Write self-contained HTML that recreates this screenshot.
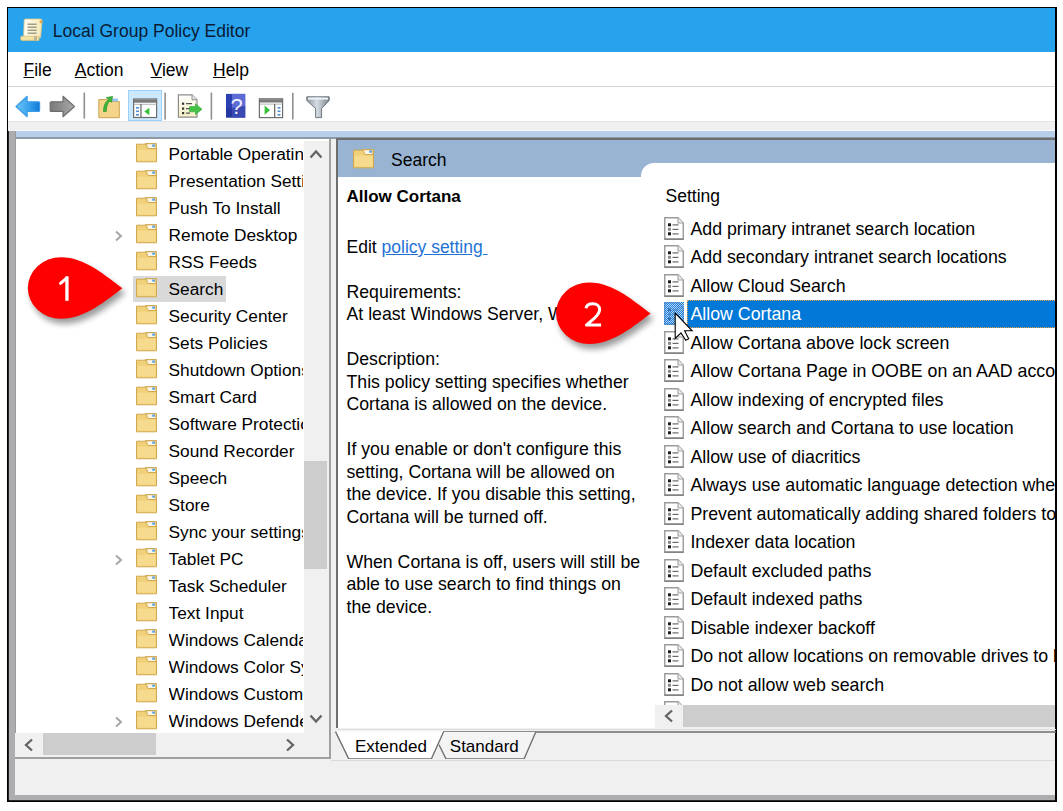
<!DOCTYPE html><html><head><meta charset="utf-8"><style>
*{margin:0;padding:0;box-sizing:border-box}
html,body{width:1063px;height:811px;overflow:hidden;background:#fff;font-family:"Liberation Sans",sans-serif;}
.a{position:absolute}
.t{position:absolute;font-size:17.5px;line-height:20px;white-space:nowrap;color:#000}
.fd{position:absolute}
.dc{position:absolute}
</style></head><body>
<div class="a" style="left:7px;top:7px;width:1050px;height:795px;background:#000"></div>
<div class="a" style="left:8px;top:8px;width:1px;height:792px;background:#222"></div>
<div class="a" style="left:9px;top:8px;width:1046px;height:792px;background:#adadb0"></div>
<div class="a" style="left:9px;top:800px;width:1046px;height:1px;background:#2a2a2a"></div>
<div class="a" style="left:8px;top:8px;width:1047px;height:44.6px;background:#27a3ee"></div>
<svg class="a" style="left:19px;top:18px" width="26" height="24" viewBox="0 0 26 24"><defs><linearGradient id="sc" x1="0" y1="0" x2="1" y2="0"><stop offset="0" stop-color="#fffef6"/><stop offset="1" stop-color="#f4e8b4"/></linearGradient></defs><path d="M5.2 2.2 Q5.6 1 7 1 H21.5 Q23.2 1 23 2.8 L21.6 19.5 H4.6 Z" fill="url(#sc)" stroke="#e0c888" stroke-width="0.8"/><circle cx="22" cy="3.8" r="1.5" fill="#e6a33e"/><path d="M8.6 6.2H17.6M8.6 9.2H17.6M8.6 12.2H17.6M8.6 15.2H17.6" stroke="#a29c88" stroke-width="1.6"/><path d="M2.8 18.2 H20 V22.4 H2.8 Q1.6 22.4 1.6 20.3 Q1.6 18.2 2.8 18.2Z" fill="#f2e4a8" stroke="#e0c070" stroke-width="0.8"/><rect x="15" y="18.4" width="3" height="3.8" fill="#9a9a90" opacity="0.6"/></svg>
<div class="t" style="left:52.8px;top:21.34px;font-size:17.5px;color:#0a1a33">Local Group Policy Editor</div>
<div class="a" style="left:8px;top:52px;width:1047px;height:70px;background:#fff"></div>
<div class="t" style="left:23.5px;top:59.64px;"><u>F</u>ile</div>
<div class="t" style="left:74.8px;top:59.64px;"><u>A</u>ction</div>
<div class="t" style="left:150.6px;top:59.64px;"><u>V</u>iew</div>
<div class="t" style="left:213px;top:59.64px;"><u>H</u>elp</div>
<div class="a" style="left:8px;top:86px;width:1047px;height:1px;background:#d5d5d5"></div>
<div class="a" style="left:8px;top:121px;width:1047px;height:1px;background:#e3e3e3"></div>
<div class="a" style="left:8px;top:122px;width:1047px;height:9px;background:#f0f0f0"></div>
<div class="a" style="left:15px;top:130px;width:1040px;height:1px;background:#f8fbff"></div>
<div class="a" style="left:15px;top:131px;width:1040px;height:6px;background:#b7cfe9"></div>
<div class="a" style="left:15px;top:137px;width:1040px;height:2px;background:#8e99a6"></div>
<div class="a" style="left:127.5px;top:89.5px;width:34px;height:31px;background:#cce8ff;border:1px solid #99d1ff"></div>
<svg class="a" style="left:0;top:0" width="340" height="125" viewBox="0 0 340 125">
<defs>
<linearGradient id="gb" x1="0" y1="0" x2="1" y2="0"><stop offset="0" stop-color="#6cc4f4"/><stop offset="0.5" stop-color="#3ea6ee"/><stop offset="1" stop-color="#0f78d6"/></linearGradient>
<linearGradient id="gg" x1="0" y1="0" x2="1" y2="0"><stop offset="0" stop-color="#7a7a7a"/><stop offset="1" stop-color="#a8a8a8"/></linearGradient>
<linearGradient id="gf" x1="0" y1="0" x2="1" y2="0"><stop offset="0" stop-color="#8c949c"/><stop offset="0.45" stop-color="#d6dde4"/><stop offset="1" stop-color="#7a828a"/></linearGradient>
<linearGradient id="gd" x1="0" y1="0" x2="0" y2="1"><stop offset="0" stop-color="#ffffff"/><stop offset="1" stop-color="#f6efc4"/></linearGradient>
</defs>
<path d="M16,106.5 L27.1,96.3 V101.8 H38.6 Q39.6,101.8 39.6,102.8 V110.4 Q39.6,111.4 38.6,111.4 H27.1 V116.7 Z" fill="url(#gb)" stroke="#3c9be6" stroke-width="1.2" stroke-linejoin="round"/>
<path d="M74.5,106.5 L63,96.3 V101.8 H51.2 Q50.2,101.8 50.2,102.8 V110.4 Q50.2,111.4 51.2,111.4 H63 V116.7 Z" fill="url(#gg)" stroke="#6e6e6e" stroke-width="1.2" stroke-linejoin="round"/>
<rect x="83.5" y="92.5" width="1.6" height="26" fill="#8f8f8f"/>
<rect x="164.3" y="92.6" width="1.6" height="27" fill="#8f8f8f"/>
<rect x="210.6" y="92.6" width="1.6" height="27" fill="#8f8f8f"/>
<rect x="292" y="92.8" width="1.6" height="26.6" fill="#8f8f8f"/>
<path d="M98.8,99.5 H107 L108.5,101.5 H119.3 V117.7 H98.8 Z" fill="#f4d488" stroke="#c9a453" stroke-width="1"/>
<rect x="111" y="98.5" width="7" height="3" fill="#9cc6ea"/>
<path d="M103.5,111.5 C103.5,106 105,102 108.5,99.8 L106.2,97.6 L112.6,96.4 L111.4,102.2 L109.8,101 C107.5,103 106.5,107 106.3,111.5 Z" fill="#3fb33a" stroke="#2f9a2c" stroke-width="0.7"/>
<rect x="133.6" y="99" width="23" height="18.5" fill="#fff" stroke="#6d6d6d" stroke-width="1.2"/>
<rect x="134" y="99.5" width="22.5" height="3.2" fill="#7a7a7a"/>
<rect x="134" y="103.8" width="22.5" height="1" fill="#b5b5b5"/>
<rect x="140.3" y="104" width="1.3" height="13.5" fill="#6d6d6d"/>
<rect x="136" y="107" width="3" height="1.6" fill="#4f8fd0"/><rect x="136" y="110.5" width="3" height="1.6" fill="#4f8fd0"/><rect x="136" y="114" width="3" height="1.6" fill="#4f8fd0"/>
<path d="M149.3,107.8 L144.3,111.6 L149.3,115.3 Z" fill="#36c036"/>
<path d="M178.4,94.8 H192 L197,99.8 V117.2 H178.4 Z" fill="url(#gd)" stroke="#8c8c8c" stroke-width="1.2"/>
<path d="M192,94.8 V99.8 H197" fill="#e6e6e6" stroke="#8c8c8c" stroke-width="1"/>
<rect x="182" y="102.6" width="2.2" height="2.2" fill="#333"/><rect x="182" y="107.5" width="2.2" height="2.2" fill="#333"/><rect x="182" y="112" width="2.2" height="2.2" fill="#333"/>
<path d="M186,103.7 H192 M186,108.6 H190 M186,113.1 H190" stroke="#555" stroke-width="1.2"/>
<path d="M189.6,106.6 H195.5 V103.7 L202,109.2 L195.5,114.6 V111.8 H189.6 Z" fill="#45c245" stroke="#2fa22f" stroke-width="0.6"/>
<rect x="226" y="93.9" width="19.2" height="23.7" fill="#2a3fb0"/>
<path d="M232,93.9 H245.2 V117.6 H232 Z" fill="#5d6bd4"/>
<path d="M226,109 L245.2,106 V117.6 H226Z" fill="#23349a" opacity="0.6"/>
<text x="236.6" y="113.8" style="font-family:'Liberation Sans'" font-size="22" fill="#eef0ff" text-anchor="middle">?</text>
<rect x="259.4" y="98.8" width="23.2" height="18.8" fill="#fff" stroke="#6d6d6d" stroke-width="1.2"/>
<rect x="259.8" y="99.3" width="22.6" height="3.2" fill="#7a7a7a"/>
<rect x="259.8" y="103.6" width="22.6" height="1" fill="#b5b5b5"/>
<rect x="274" y="104" width="1.3" height="13.5" fill="#6d6d6d"/>
<rect x="277.5" y="107" width="3" height="1.6" fill="#4f8fd0"/><rect x="277.5" y="110.5" width="3" height="1.6" fill="#4f8fd0"/><rect x="277.5" y="114" width="3" height="1.6" fill="#4f8fd0"/>
<path d="M264.6,105.5 L270,110.2 L264.6,114.8 Z" fill="#36c036"/>
<path d="M306.8,96.8 H329.2 V100.6 L321.6,108.5 V117.6 H315.6 V108.5 L306.8,100.6 Z" fill="url(#gf)" stroke="#6f7780" stroke-width="1" stroke-linejoin="round"/>
<rect x="308" y="97.6" width="20" height="2" fill="#eef2f6"/>
</svg>
<div class="a" style="left:15px;top:139px;width:316px;height:620px;background:#a0a0a0"></div>
<div class="a" style="left:15px;top:139px;width:314px;height:618px;background:#fff;overflow:hidden" id="lp">
<div class="a" style="left:121px;top:4.30px"><svg class="fd" width="22" height="20" viewBox="0 0 22 20"><path d="M9.5 0.5H20.5V8H9.5Z" fill="#e6c46e" stroke="#d0aa55"/><rect x="11.2" y="1.3" width="8" height="3.8" fill="#f8f6ec"/><rect x="16.2" y="1.5" width="2.8" height="2.2" fill="#5b9fe0"/><path d="M0.5 1.2H9Q10.2 1.2 10.7 2.6L11.4 4.6Q11.8 5.5 12.8 5.5H20.5V18.8H0.5Z" fill="#f1d07a" stroke="#d0a84e"/><path d="M1.5 6.8H19.5V17.6H1.5Z" fill="#f6da8e"/></svg></div>
<div class="t" style="left:153.6px;top:4.69px;font-size:17.3px;width:134px;overflow:hidden">Portable Operating System</div>
<div class="a" style="left:121px;top:31.30px"><svg class="fd" width="22" height="20" viewBox="0 0 22 20"><path d="M9.5 0.5H20.5V8H9.5Z" fill="#e6c46e" stroke="#d0aa55"/><rect x="11.2" y="1.3" width="8" height="3.8" fill="#f8f6ec"/><rect x="16.2" y="1.5" width="2.8" height="2.2" fill="#5b9fe0"/><path d="M0.5 1.2H9Q10.2 1.2 10.7 2.6L11.4 4.6Q11.8 5.5 12.8 5.5H20.5V18.8H0.5Z" fill="#f1d07a" stroke="#d0a84e"/><path d="M1.5 6.8H19.5V17.6H1.5Z" fill="#f6da8e"/></svg></div>
<div class="t" style="left:153.6px;top:31.69px;font-size:17.3px;width:134px;overflow:hidden">Presentation Settings</div>
<div class="a" style="left:121px;top:58.30px"><svg class="fd" width="22" height="20" viewBox="0 0 22 20"><path d="M9.5 0.5H20.5V8H9.5Z" fill="#e6c46e" stroke="#d0aa55"/><rect x="11.2" y="1.3" width="8" height="3.8" fill="#f8f6ec"/><rect x="16.2" y="1.5" width="2.8" height="2.2" fill="#5b9fe0"/><path d="M0.5 1.2H9Q10.2 1.2 10.7 2.6L11.4 4.6Q11.8 5.5 12.8 5.5H20.5V18.8H0.5Z" fill="#f1d07a" stroke="#d0a84e"/><path d="M1.5 6.8H19.5V17.6H1.5Z" fill="#f6da8e"/></svg></div>
<div class="t" style="left:153.6px;top:58.69px;font-size:17.3px;width:134px;overflow:hidden">Push To Install</div>
<div class="a" style="left:121px;top:85.30px"><svg class="fd" width="22" height="20" viewBox="0 0 22 20"><path d="M9.5 0.5H20.5V8H9.5Z" fill="#e6c46e" stroke="#d0aa55"/><rect x="11.2" y="1.3" width="8" height="3.8" fill="#f8f6ec"/><rect x="16.2" y="1.5" width="2.8" height="2.2" fill="#5b9fe0"/><path d="M0.5 1.2H9Q10.2 1.2 10.7 2.6L11.4 4.6Q11.8 5.5 12.8 5.5H20.5V18.8H0.5Z" fill="#f1d07a" stroke="#d0a84e"/><path d="M1.5 6.8H19.5V17.6H1.5Z" fill="#f6da8e"/></svg></div>
<div class="t" style="left:153.6px;top:85.69px;font-size:17.3px;width:134px;overflow:hidden">Remote Desktop</div>
<svg class="a" style="left:98px;top:90px" width="12" height="14" viewBox="0 0 12 14"><path d="M3 2.5 L8 7 L3 11.5" fill="none" stroke="#a6a6a6" stroke-width="2"/></svg>
<div class="a" style="left:121px;top:112.30px"><svg class="fd" width="22" height="20" viewBox="0 0 22 20"><path d="M9.5 0.5H20.5V8H9.5Z" fill="#e6c46e" stroke="#d0aa55"/><rect x="11.2" y="1.3" width="8" height="3.8" fill="#f8f6ec"/><rect x="16.2" y="1.5" width="2.8" height="2.2" fill="#5b9fe0"/><path d="M0.5 1.2H9Q10.2 1.2 10.7 2.6L11.4 4.6Q11.8 5.5 12.8 5.5H20.5V18.8H0.5Z" fill="#f1d07a" stroke="#d0a84e"/><path d="M1.5 6.8H19.5V17.6H1.5Z" fill="#f6da8e"/></svg></div>
<div class="t" style="left:153.6px;top:112.69px;font-size:17.3px;width:134px;overflow:hidden">RSS Feeds</div>
<div class="a" style="left:118px;top:137px;width:93px;height:26px;background:#d9d9d9"></div>
<div class="a" style="left:121px;top:139.30px"><svg class="fd" width="22" height="20" viewBox="0 0 22 20"><path d="M9.5 0.5H20.5V8H9.5Z" fill="#e6c46e" stroke="#d0aa55"/><rect x="11.2" y="1.3" width="8" height="3.8" fill="#f8f6ec"/><rect x="16.2" y="1.5" width="2.8" height="2.2" fill="#5b9fe0"/><path d="M0.5 1.2H9Q10.2 1.2 10.7 2.6L11.4 4.6Q11.8 5.5 12.8 5.5H20.5V18.8H0.5Z" fill="#f1d07a" stroke="#d0a84e"/><path d="M1.5 6.8H19.5V17.6H1.5Z" fill="#f6da8e"/></svg></div>
<div class="t" style="left:153.6px;top:139.69px;font-size:17.3px;width:134px;overflow:hidden">Search</div>
<div class="a" style="left:121px;top:166.30px"><svg class="fd" width="22" height="20" viewBox="0 0 22 20"><path d="M9.5 0.5H20.5V8H9.5Z" fill="#e6c46e" stroke="#d0aa55"/><rect x="11.2" y="1.3" width="8" height="3.8" fill="#f8f6ec"/><rect x="16.2" y="1.5" width="2.8" height="2.2" fill="#5b9fe0"/><path d="M0.5 1.2H9Q10.2 1.2 10.7 2.6L11.4 4.6Q11.8 5.5 12.8 5.5H20.5V18.8H0.5Z" fill="#f1d07a" stroke="#d0a84e"/><path d="M1.5 6.8H19.5V17.6H1.5Z" fill="#f6da8e"/></svg></div>
<div class="t" style="left:153.6px;top:166.69px;font-size:17.3px;width:134px;overflow:hidden">Security Center</div>
<div class="a" style="left:121px;top:193.30px"><svg class="fd" width="22" height="20" viewBox="0 0 22 20"><path d="M9.5 0.5H20.5V8H9.5Z" fill="#e6c46e" stroke="#d0aa55"/><rect x="11.2" y="1.3" width="8" height="3.8" fill="#f8f6ec"/><rect x="16.2" y="1.5" width="2.8" height="2.2" fill="#5b9fe0"/><path d="M0.5 1.2H9Q10.2 1.2 10.7 2.6L11.4 4.6Q11.8 5.5 12.8 5.5H20.5V18.8H0.5Z" fill="#f1d07a" stroke="#d0a84e"/><path d="M1.5 6.8H19.5V17.6H1.5Z" fill="#f6da8e"/></svg></div>
<div class="t" style="left:153.6px;top:193.69px;font-size:17.3px;width:134px;overflow:hidden">Sets Policies</div>
<div class="a" style="left:121px;top:220.30px"><svg class="fd" width="22" height="20" viewBox="0 0 22 20"><path d="M9.5 0.5H20.5V8H9.5Z" fill="#e6c46e" stroke="#d0aa55"/><rect x="11.2" y="1.3" width="8" height="3.8" fill="#f8f6ec"/><rect x="16.2" y="1.5" width="2.8" height="2.2" fill="#5b9fe0"/><path d="M0.5 1.2H9Q10.2 1.2 10.7 2.6L11.4 4.6Q11.8 5.5 12.8 5.5H20.5V18.8H0.5Z" fill="#f1d07a" stroke="#d0a84e"/><path d="M1.5 6.8H19.5V17.6H1.5Z" fill="#f6da8e"/></svg></div>
<div class="t" style="left:153.6px;top:220.69px;font-size:17.3px;width:134px;overflow:hidden">Shutdown Options</div>
<div class="a" style="left:121px;top:247.30px"><svg class="fd" width="22" height="20" viewBox="0 0 22 20"><path d="M9.5 0.5H20.5V8H9.5Z" fill="#e6c46e" stroke="#d0aa55"/><rect x="11.2" y="1.3" width="8" height="3.8" fill="#f8f6ec"/><rect x="16.2" y="1.5" width="2.8" height="2.2" fill="#5b9fe0"/><path d="M0.5 1.2H9Q10.2 1.2 10.7 2.6L11.4 4.6Q11.8 5.5 12.8 5.5H20.5V18.8H0.5Z" fill="#f1d07a" stroke="#d0a84e"/><path d="M1.5 6.8H19.5V17.6H1.5Z" fill="#f6da8e"/></svg></div>
<div class="t" style="left:153.6px;top:247.69px;font-size:17.3px;width:134px;overflow:hidden">Smart Card</div>
<div class="a" style="left:121px;top:274.30px"><svg class="fd" width="22" height="20" viewBox="0 0 22 20"><path d="M9.5 0.5H20.5V8H9.5Z" fill="#e6c46e" stroke="#d0aa55"/><rect x="11.2" y="1.3" width="8" height="3.8" fill="#f8f6ec"/><rect x="16.2" y="1.5" width="2.8" height="2.2" fill="#5b9fe0"/><path d="M0.5 1.2H9Q10.2 1.2 10.7 2.6L11.4 4.6Q11.8 5.5 12.8 5.5H20.5V18.8H0.5Z" fill="#f1d07a" stroke="#d0a84e"/><path d="M1.5 6.8H19.5V17.6H1.5Z" fill="#f6da8e"/></svg></div>
<div class="t" style="left:153.6px;top:274.69px;font-size:17.3px;width:134px;overflow:hidden">Software Protection Platform</div>
<div class="a" style="left:121px;top:301.30px"><svg class="fd" width="22" height="20" viewBox="0 0 22 20"><path d="M9.5 0.5H20.5V8H9.5Z" fill="#e6c46e" stroke="#d0aa55"/><rect x="11.2" y="1.3" width="8" height="3.8" fill="#f8f6ec"/><rect x="16.2" y="1.5" width="2.8" height="2.2" fill="#5b9fe0"/><path d="M0.5 1.2H9Q10.2 1.2 10.7 2.6L11.4 4.6Q11.8 5.5 12.8 5.5H20.5V18.8H0.5Z" fill="#f1d07a" stroke="#d0a84e"/><path d="M1.5 6.8H19.5V17.6H1.5Z" fill="#f6da8e"/></svg></div>
<div class="t" style="left:153.6px;top:301.69px;font-size:17.3px;width:134px;overflow:hidden">Sound Recorder</div>
<div class="a" style="left:121px;top:328.30px"><svg class="fd" width="22" height="20" viewBox="0 0 22 20"><path d="M9.5 0.5H20.5V8H9.5Z" fill="#e6c46e" stroke="#d0aa55"/><rect x="11.2" y="1.3" width="8" height="3.8" fill="#f8f6ec"/><rect x="16.2" y="1.5" width="2.8" height="2.2" fill="#5b9fe0"/><path d="M0.5 1.2H9Q10.2 1.2 10.7 2.6L11.4 4.6Q11.8 5.5 12.8 5.5H20.5V18.8H0.5Z" fill="#f1d07a" stroke="#d0a84e"/><path d="M1.5 6.8H19.5V17.6H1.5Z" fill="#f6da8e"/></svg></div>
<div class="t" style="left:153.6px;top:328.69px;font-size:17.3px;width:134px;overflow:hidden">Speech</div>
<div class="a" style="left:121px;top:355.30px"><svg class="fd" width="22" height="20" viewBox="0 0 22 20"><path d="M9.5 0.5H20.5V8H9.5Z" fill="#e6c46e" stroke="#d0aa55"/><rect x="11.2" y="1.3" width="8" height="3.8" fill="#f8f6ec"/><rect x="16.2" y="1.5" width="2.8" height="2.2" fill="#5b9fe0"/><path d="M0.5 1.2H9Q10.2 1.2 10.7 2.6L11.4 4.6Q11.8 5.5 12.8 5.5H20.5V18.8H0.5Z" fill="#f1d07a" stroke="#d0a84e"/><path d="M1.5 6.8H19.5V17.6H1.5Z" fill="#f6da8e"/></svg></div>
<div class="t" style="left:153.6px;top:355.69px;font-size:17.3px;width:134px;overflow:hidden">Store</div>
<div class="a" style="left:121px;top:382.30px"><svg class="fd" width="22" height="20" viewBox="0 0 22 20"><path d="M9.5 0.5H20.5V8H9.5Z" fill="#e6c46e" stroke="#d0aa55"/><rect x="11.2" y="1.3" width="8" height="3.8" fill="#f8f6ec"/><rect x="16.2" y="1.5" width="2.8" height="2.2" fill="#5b9fe0"/><path d="M0.5 1.2H9Q10.2 1.2 10.7 2.6L11.4 4.6Q11.8 5.5 12.8 5.5H20.5V18.8H0.5Z" fill="#f1d07a" stroke="#d0a84e"/><path d="M1.5 6.8H19.5V17.6H1.5Z" fill="#f6da8e"/></svg></div>
<div class="t" style="left:153.6px;top:382.69px;font-size:17.3px;width:134px;overflow:hidden">Sync your settings</div>
<div class="a" style="left:121px;top:409.30px"><svg class="fd" width="22" height="20" viewBox="0 0 22 20"><path d="M9.5 0.5H20.5V8H9.5Z" fill="#e6c46e" stroke="#d0aa55"/><rect x="11.2" y="1.3" width="8" height="3.8" fill="#f8f6ec"/><rect x="16.2" y="1.5" width="2.8" height="2.2" fill="#5b9fe0"/><path d="M0.5 1.2H9Q10.2 1.2 10.7 2.6L11.4 4.6Q11.8 5.5 12.8 5.5H20.5V18.8H0.5Z" fill="#f1d07a" stroke="#d0a84e"/><path d="M1.5 6.8H19.5V17.6H1.5Z" fill="#f6da8e"/></svg></div>
<div class="t" style="left:153.6px;top:409.69px;font-size:17.3px;width:134px;overflow:hidden">Tablet PC</div>
<svg class="a" style="left:98px;top:414px" width="12" height="14" viewBox="0 0 12 14"><path d="M3 2.5 L8 7 L3 11.5" fill="none" stroke="#a6a6a6" stroke-width="2"/></svg>
<div class="a" style="left:121px;top:436.30px"><svg class="fd" width="22" height="20" viewBox="0 0 22 20"><path d="M9.5 0.5H20.5V8H9.5Z" fill="#e6c46e" stroke="#d0aa55"/><rect x="11.2" y="1.3" width="8" height="3.8" fill="#f8f6ec"/><rect x="16.2" y="1.5" width="2.8" height="2.2" fill="#5b9fe0"/><path d="M0.5 1.2H9Q10.2 1.2 10.7 2.6L11.4 4.6Q11.8 5.5 12.8 5.5H20.5V18.8H0.5Z" fill="#f1d07a" stroke="#d0a84e"/><path d="M1.5 6.8H19.5V17.6H1.5Z" fill="#f6da8e"/></svg></div>
<div class="t" style="left:153.6px;top:436.69px;font-size:17.3px;width:134px;overflow:hidden">Task Scheduler</div>
<div class="a" style="left:121px;top:463.30px"><svg class="fd" width="22" height="20" viewBox="0 0 22 20"><path d="M9.5 0.5H20.5V8H9.5Z" fill="#e6c46e" stroke="#d0aa55"/><rect x="11.2" y="1.3" width="8" height="3.8" fill="#f8f6ec"/><rect x="16.2" y="1.5" width="2.8" height="2.2" fill="#5b9fe0"/><path d="M0.5 1.2H9Q10.2 1.2 10.7 2.6L11.4 4.6Q11.8 5.5 12.8 5.5H20.5V18.8H0.5Z" fill="#f1d07a" stroke="#d0a84e"/><path d="M1.5 6.8H19.5V17.6H1.5Z" fill="#f6da8e"/></svg></div>
<div class="t" style="left:153.6px;top:463.69px;font-size:17.3px;width:134px;overflow:hidden">Text Input</div>
<div class="a" style="left:121px;top:490.30px"><svg class="fd" width="22" height="20" viewBox="0 0 22 20"><path d="M9.5 0.5H20.5V8H9.5Z" fill="#e6c46e" stroke="#d0aa55"/><rect x="11.2" y="1.3" width="8" height="3.8" fill="#f8f6ec"/><rect x="16.2" y="1.5" width="2.8" height="2.2" fill="#5b9fe0"/><path d="M0.5 1.2H9Q10.2 1.2 10.7 2.6L11.4 4.6Q11.8 5.5 12.8 5.5H20.5V18.8H0.5Z" fill="#f1d07a" stroke="#d0a84e"/><path d="M1.5 6.8H19.5V17.6H1.5Z" fill="#f6da8e"/></svg></div>
<div class="t" style="left:153.6px;top:490.69px;font-size:17.3px;width:134px;overflow:hidden">Windows Calendar</div>
<div class="a" style="left:121px;top:517.30px"><svg class="fd" width="22" height="20" viewBox="0 0 22 20"><path d="M9.5 0.5H20.5V8H9.5Z" fill="#e6c46e" stroke="#d0aa55"/><rect x="11.2" y="1.3" width="8" height="3.8" fill="#f8f6ec"/><rect x="16.2" y="1.5" width="2.8" height="2.2" fill="#5b9fe0"/><path d="M0.5 1.2H9Q10.2 1.2 10.7 2.6L11.4 4.6Q11.8 5.5 12.8 5.5H20.5V18.8H0.5Z" fill="#f1d07a" stroke="#d0a84e"/><path d="M1.5 6.8H19.5V17.6H1.5Z" fill="#f6da8e"/></svg></div>
<div class="t" style="left:153.6px;top:517.69px;font-size:17.3px;width:134px;overflow:hidden">Windows Color System</div>
<div class="a" style="left:121px;top:544.30px"><svg class="fd" width="22" height="20" viewBox="0 0 22 20"><path d="M9.5 0.5H20.5V8H9.5Z" fill="#e6c46e" stroke="#d0aa55"/><rect x="11.2" y="1.3" width="8" height="3.8" fill="#f8f6ec"/><rect x="16.2" y="1.5" width="2.8" height="2.2" fill="#5b9fe0"/><path d="M0.5 1.2H9Q10.2 1.2 10.7 2.6L11.4 4.6Q11.8 5.5 12.8 5.5H20.5V18.8H0.5Z" fill="#f1d07a" stroke="#d0a84e"/><path d="M1.5 6.8H19.5V17.6H1.5Z" fill="#f6da8e"/></svg></div>
<div class="t" style="left:153.6px;top:544.69px;font-size:17.3px;width:134px;overflow:hidden">Windows Customer Experience</div>
<div class="a" style="left:121px;top:571.30px"><svg class="fd" width="22" height="20" viewBox="0 0 22 20"><path d="M9.5 0.5H20.5V8H9.5Z" fill="#e6c46e" stroke="#d0aa55"/><rect x="11.2" y="1.3" width="8" height="3.8" fill="#f8f6ec"/><rect x="16.2" y="1.5" width="2.8" height="2.2" fill="#5b9fe0"/><path d="M0.5 1.2H9Q10.2 1.2 10.7 2.6L11.4 4.6Q11.8 5.5 12.8 5.5H20.5V18.8H0.5Z" fill="#f1d07a" stroke="#d0a84e"/><path d="M1.5 6.8H19.5V17.6H1.5Z" fill="#f6da8e"/></svg></div>
<div class="t" style="left:153.6px;top:571.69px;font-size:17.3px;width:134px;overflow:hidden">Windows Defender</div>
<svg class="a" style="left:98px;top:576px" width="12" height="14" viewBox="0 0 12 14"><path d="M3 2.5 L8 7 L3 11.5" fill="none" stroke="#a6a6a6" stroke-width="2"/></svg>
</div>
<div class="a" style="left:15px;top:131px;width:1px;height:663px;background:#9a9aa0"></div>
<div class="a" style="left:304px;top:141px;width:25px;height:592px;background:#f0f0f0"></div>
<div class="a" style="left:304px;top:461px;width:23px;height:108px;background:#cdcdcd"></div>
<svg class="a" style="left:307px;top:146px" width="18" height="16" viewBox="0 0 18 16"><path d="M3.5 11.5 L9 5.5 L14.5 11.5" fill="none" stroke="#646464" stroke-width="2.3"/></svg>
<svg class="a" style="left:307px;top:711px" width="18" height="16" viewBox="0 0 18 16"><path d="M3.5 4.5 L9 10.5 L14.5 4.5" fill="none" stroke="#646464" stroke-width="2.3"/></svg>
<div class="a" style="left:15px;top:733px;width:314px;height:24px;background:#f0f0f0"></div>
<div class="a" style="left:43px;top:733px;width:113px;height:22px;background:#cdcdcd"></div>
<svg class="a" style="left:21px;top:736px" width="16" height="18" viewBox="0 0 16 18"><path d="M11 3.5 L5 9 L11 14.5" fill="none" stroke="#646464" stroke-width="2.3"/></svg>
<svg class="a" style="left:282px;top:736px" width="16" height="18" viewBox="0 0 16 18"><path d="M5 3.5 L11 9 L5 14.5" fill="none" stroke="#646464" stroke-width="2.3"/></svg>
<div class="a" style="left:331px;top:139px;width:5px;height:620px;background:#f0f0f0"></div>
<div class="a" style="left:336px;top:138px;width:719px;height:591px;background:#6e6e6e"></div>
<div class="a" style="left:338px;top:140px;width:717px;height:589px;background:#fff"></div>
<div class="a" style="left:338px;top:140px;width:717px;height:37px;background:#98b4d2"></div>
<div class="a" style="left:641px;top:163px;width:414px;height:30px;background:#fff;border-top-left-radius:13px"></div>
<div class="a" style="left:353px;top:149px"><svg class="fd" width="22" height="20" viewBox="0 0 22 20"><path d="M9.5 0.5H20.5V8H9.5Z" fill="#e6c46e" stroke="#d0aa55"/><rect x="11.2" y="1.3" width="8" height="3.8" fill="#f8f6ec"/><rect x="16.2" y="1.5" width="2.8" height="2.2" fill="#5b9fe0"/><path d="M0.5 1.2H9Q10.2 1.2 10.7 2.6L11.4 4.6Q11.8 5.5 12.8 5.5H20.5V18.8H0.5Z" fill="#f1d07a" stroke="#d0a84e"/><path d="M1.5 6.8H19.5V17.6H1.5Z" fill="#f6da8e"/></svg></div>
<div class="t" style="left:391px;top:149.94px;">Search</div>
<div class="t" style="left:346.5px;top:187.44px;font-weight:bold;font-size:17px">Allow Cortana</div>
<div class="t" style="left:346.5px;top:236.94px;">Edit <span style="color:#1f72d6;text-decoration:underline">policy setting&nbsp;</span></div>
<div class="t" style="left:346.5px;top:281.54px;font-size:17.7px">Requirements:</div>
<div class="t" style="left:346.5px;top:304.14px;font-size:17.7px">At least Windows Server, Windows 10</div>
<div class="t" style="left:346.5px;top:349.04px;font-size:17.7px">Description:</div>
<div class="t" style="left:346.5px;top:371.54px;font-size:17.7px">This policy setting specifies whether</div>
<div class="t" style="left:346.5px;top:394.04px;font-size:17.7px">Cortana is allowed on the device.</div>
<div class="t" style="left:346.5px;top:439.04px;font-size:17.7px">If you enable or don't configure this</div>
<div class="t" style="left:346.5px;top:461.54px;font-size:17.7px">setting, Cortana will be allowed on</div>
<div class="t" style="left:346.5px;top:484.04px;font-size:17.7px">the device. If you disable this setting,</div>
<div class="t" style="left:346.5px;top:506.54px;font-size:17.7px">Cortana will be turned off.</div>
<div class="t" style="left:346.5px;top:551.54px;font-size:17.7px">When Cortana is off, users will still be</div>
<div class="t" style="left:346.5px;top:574.04px;font-size:17.7px">able to use search to find things on</div>
<div class="t" style="left:346.5px;top:596.54px;font-size:17.7px">the device.</div>
<div class="a" style="left:652px;top:177px;width:403px;height:552px;background:#fff;overflow:hidden" id="rp">
<div class="t" style="left:13.5px;top:8.74px;">Setting</div>
<div class="t" style="left:38.39999999999998px;top:41.84px;font-size:17.8px">Add primary intranet search location</div>
<div class="a" style="left:12px;top:39.80px"><svg class="dc" width="20" height="23" viewBox="0 0 20 23"><path d="M0.75 0.75H14L19.25 6V22.25H0.75Z" fill="#fff" stroke="#9a9a9a" stroke-width="1.4"/><path d="M14 0.75V6H19.25" fill="#ececec" stroke="#a0a0a0" stroke-width="1.1"/><path d="M0.75 22.1H19.25" stroke="#7a7a7a" stroke-width="1.3"/><rect x="4" y="6.3" width="3" height="3" fill="#1a1a1a"/><rect x="4" y="10.8" width="3" height="3" fill="#8a8a8a"/><rect x="4" y="15.3" width="3" height="3" fill="#1a1a1a"/><rect x="8.5" y="7.3" width="6" height="1.2" fill="#6a6a6a"/><rect x="8.5" y="11.8" width="6" height="1.2" fill="#6a6a6a"/><rect x="8.5" y="16.3" width="6" height="1.2" fill="#6a6a6a"/></svg></div>
<div class="t" style="left:38.39999999999998px;top:70.34px;font-size:17.8px">Add secondary intranet search locations</div>
<div class="a" style="left:12px;top:68.30px"><svg class="dc" width="20" height="23" viewBox="0 0 20 23"><path d="M0.75 0.75H14L19.25 6V22.25H0.75Z" fill="#fff" stroke="#9a9a9a" stroke-width="1.4"/><path d="M14 0.75V6H19.25" fill="#ececec" stroke="#a0a0a0" stroke-width="1.1"/><path d="M0.75 22.1H19.25" stroke="#7a7a7a" stroke-width="1.3"/><rect x="4" y="6.3" width="3" height="3" fill="#1a1a1a"/><rect x="4" y="10.8" width="3" height="3" fill="#8a8a8a"/><rect x="4" y="15.3" width="3" height="3" fill="#1a1a1a"/><rect x="8.5" y="7.3" width="6" height="1.2" fill="#6a6a6a"/><rect x="8.5" y="11.8" width="6" height="1.2" fill="#6a6a6a"/><rect x="8.5" y="16.3" width="6" height="1.2" fill="#6a6a6a"/></svg></div>
<div class="t" style="left:38.39999999999998px;top:98.84px;font-size:17.8px">Allow Cloud Search</div>
<div class="a" style="left:12px;top:96.80px"><svg class="dc" width="20" height="23" viewBox="0 0 20 23"><path d="M0.75 0.75H14L19.25 6V22.25H0.75Z" fill="#fff" stroke="#9a9a9a" stroke-width="1.4"/><path d="M14 0.75V6H19.25" fill="#ececec" stroke="#a0a0a0" stroke-width="1.1"/><path d="M0.75 22.1H19.25" stroke="#7a7a7a" stroke-width="1.3"/><rect x="4" y="6.3" width="3" height="3" fill="#1a1a1a"/><rect x="4" y="10.8" width="3" height="3" fill="#8a8a8a"/><rect x="4" y="15.3" width="3" height="3" fill="#1a1a1a"/><rect x="8.5" y="7.3" width="6" height="1.2" fill="#6a6a6a"/><rect x="8.5" y="11.8" width="6" height="1.2" fill="#6a6a6a"/><rect x="8.5" y="16.3" width="6" height="1.2" fill="#6a6a6a"/></svg></div>
<div class="a" style="left:35px;top:123px;width:400px;height:28px;background:#0078d7;outline:1px dotted #e8a050;outline-offset:-1px"></div>
<div class="t" style="left:38.39999999999998px;top:127.34px;color:#fff;font-size:17.8px">Allow Cortana</div>
<div class="a" style="left:12px;top:125.30px"><svg class="dc" width="20" height="23" viewBox="0 0 20 23"><path d="M0.75 0.75H14L19.25 6V22.25H0.75Z" fill="#fff" stroke="#9a9a9a" stroke-width="1.4"/><path d="M14 0.75V6H19.25" fill="#ececec" stroke="#a0a0a0" stroke-width="1.1"/><path d="M0.75 22.1H19.25" stroke="#7a7a7a" stroke-width="1.3"/><rect x="4" y="6.3" width="3" height="3" fill="#1a1a1a"/><rect x="4" y="10.8" width="3" height="3" fill="#8a8a8a"/><rect x="4" y="15.3" width="3" height="3" fill="#1a1a1a"/><rect x="8.5" y="7.3" width="6" height="1.2" fill="#6a6a6a"/><rect x="8.5" y="11.8" width="6" height="1.2" fill="#6a6a6a"/><rect x="8.5" y="16.3" width="6" height="1.2" fill="#6a6a6a"/></svg></div>
<div class="a" style="left:12px;top:125.30px;width:20px;height:23px;background:repeating-conic-gradient(#1a7ee0 0 25%, rgba(120,180,240,0.5) 0 50%) 0 0/2px 2px"></div>
<div class="t" style="left:38.39999999999998px;top:155.84px;font-size:17.8px">Allow Cortana above lock screen</div>
<div class="a" style="left:12px;top:153.80px"><svg class="dc" width="20" height="23" viewBox="0 0 20 23"><path d="M0.75 0.75H14L19.25 6V22.25H0.75Z" fill="#fff" stroke="#9a9a9a" stroke-width="1.4"/><path d="M14 0.75V6H19.25" fill="#ececec" stroke="#a0a0a0" stroke-width="1.1"/><path d="M0.75 22.1H19.25" stroke="#7a7a7a" stroke-width="1.3"/><rect x="4" y="6.3" width="3" height="3" fill="#1a1a1a"/><rect x="4" y="10.8" width="3" height="3" fill="#8a8a8a"/><rect x="4" y="15.3" width="3" height="3" fill="#1a1a1a"/><rect x="8.5" y="7.3" width="6" height="1.2" fill="#6a6a6a"/><rect x="8.5" y="11.8" width="6" height="1.2" fill="#6a6a6a"/><rect x="8.5" y="16.3" width="6" height="1.2" fill="#6a6a6a"/></svg></div>
<div class="t" style="left:38.39999999999998px;top:184.34px;font-size:17.8px">Allow Cortana Page in OOBE on an AAD account</div>
<div class="a" style="left:12px;top:182.30px"><svg class="dc" width="20" height="23" viewBox="0 0 20 23"><path d="M0.75 0.75H14L19.25 6V22.25H0.75Z" fill="#fff" stroke="#9a9a9a" stroke-width="1.4"/><path d="M14 0.75V6H19.25" fill="#ececec" stroke="#a0a0a0" stroke-width="1.1"/><path d="M0.75 22.1H19.25" stroke="#7a7a7a" stroke-width="1.3"/><rect x="4" y="6.3" width="3" height="3" fill="#1a1a1a"/><rect x="4" y="10.8" width="3" height="3" fill="#8a8a8a"/><rect x="4" y="15.3" width="3" height="3" fill="#1a1a1a"/><rect x="8.5" y="7.3" width="6" height="1.2" fill="#6a6a6a"/><rect x="8.5" y="11.8" width="6" height="1.2" fill="#6a6a6a"/><rect x="8.5" y="16.3" width="6" height="1.2" fill="#6a6a6a"/></svg></div>
<div class="t" style="left:38.39999999999998px;top:212.84px;font-size:17.8px">Allow indexing of encrypted files</div>
<div class="a" style="left:12px;top:210.80px"><svg class="dc" width="20" height="23" viewBox="0 0 20 23"><path d="M0.75 0.75H14L19.25 6V22.25H0.75Z" fill="#fff" stroke="#9a9a9a" stroke-width="1.4"/><path d="M14 0.75V6H19.25" fill="#ececec" stroke="#a0a0a0" stroke-width="1.1"/><path d="M0.75 22.1H19.25" stroke="#7a7a7a" stroke-width="1.3"/><rect x="4" y="6.3" width="3" height="3" fill="#1a1a1a"/><rect x="4" y="10.8" width="3" height="3" fill="#8a8a8a"/><rect x="4" y="15.3" width="3" height="3" fill="#1a1a1a"/><rect x="8.5" y="7.3" width="6" height="1.2" fill="#6a6a6a"/><rect x="8.5" y="11.8" width="6" height="1.2" fill="#6a6a6a"/><rect x="8.5" y="16.3" width="6" height="1.2" fill="#6a6a6a"/></svg></div>
<div class="t" style="left:38.39999999999998px;top:241.34px;font-size:17.8px">Allow search and Cortana to use location</div>
<div class="a" style="left:12px;top:239.30px"><svg class="dc" width="20" height="23" viewBox="0 0 20 23"><path d="M0.75 0.75H14L19.25 6V22.25H0.75Z" fill="#fff" stroke="#9a9a9a" stroke-width="1.4"/><path d="M14 0.75V6H19.25" fill="#ececec" stroke="#a0a0a0" stroke-width="1.1"/><path d="M0.75 22.1H19.25" stroke="#7a7a7a" stroke-width="1.3"/><rect x="4" y="6.3" width="3" height="3" fill="#1a1a1a"/><rect x="4" y="10.8" width="3" height="3" fill="#8a8a8a"/><rect x="4" y="15.3" width="3" height="3" fill="#1a1a1a"/><rect x="8.5" y="7.3" width="6" height="1.2" fill="#6a6a6a"/><rect x="8.5" y="11.8" width="6" height="1.2" fill="#6a6a6a"/><rect x="8.5" y="16.3" width="6" height="1.2" fill="#6a6a6a"/></svg></div>
<div class="t" style="left:38.39999999999998px;top:269.84px;font-size:17.8px">Allow use of diacritics</div>
<div class="a" style="left:12px;top:267.80px"><svg class="dc" width="20" height="23" viewBox="0 0 20 23"><path d="M0.75 0.75H14L19.25 6V22.25H0.75Z" fill="#fff" stroke="#9a9a9a" stroke-width="1.4"/><path d="M14 0.75V6H19.25" fill="#ececec" stroke="#a0a0a0" stroke-width="1.1"/><path d="M0.75 22.1H19.25" stroke="#7a7a7a" stroke-width="1.3"/><rect x="4" y="6.3" width="3" height="3" fill="#1a1a1a"/><rect x="4" y="10.8" width="3" height="3" fill="#8a8a8a"/><rect x="4" y="15.3" width="3" height="3" fill="#1a1a1a"/><rect x="8.5" y="7.3" width="6" height="1.2" fill="#6a6a6a"/><rect x="8.5" y="11.8" width="6" height="1.2" fill="#6a6a6a"/><rect x="8.5" y="16.3" width="6" height="1.2" fill="#6a6a6a"/></svg></div>
<div class="t" style="left:38.39999999999998px;top:298.34px;font-size:17.8px">Always use automatic language detection when indexing</div>
<div class="a" style="left:12px;top:296.30px"><svg class="dc" width="20" height="23" viewBox="0 0 20 23"><path d="M0.75 0.75H14L19.25 6V22.25H0.75Z" fill="#fff" stroke="#9a9a9a" stroke-width="1.4"/><path d="M14 0.75V6H19.25" fill="#ececec" stroke="#a0a0a0" stroke-width="1.1"/><path d="M0.75 22.1H19.25" stroke="#7a7a7a" stroke-width="1.3"/><rect x="4" y="6.3" width="3" height="3" fill="#1a1a1a"/><rect x="4" y="10.8" width="3" height="3" fill="#8a8a8a"/><rect x="4" y="15.3" width="3" height="3" fill="#1a1a1a"/><rect x="8.5" y="7.3" width="6" height="1.2" fill="#6a6a6a"/><rect x="8.5" y="11.8" width="6" height="1.2" fill="#6a6a6a"/><rect x="8.5" y="16.3" width="6" height="1.2" fill="#6a6a6a"/></svg></div>
<div class="t" style="left:38.39999999999998px;top:326.84px;font-size:17.8px">Prevent automatically adding shared folders to the index</div>
<div class="a" style="left:12px;top:324.80px"><svg class="dc" width="20" height="23" viewBox="0 0 20 23"><path d="M0.75 0.75H14L19.25 6V22.25H0.75Z" fill="#fff" stroke="#9a9a9a" stroke-width="1.4"/><path d="M14 0.75V6H19.25" fill="#ececec" stroke="#a0a0a0" stroke-width="1.1"/><path d="M0.75 22.1H19.25" stroke="#7a7a7a" stroke-width="1.3"/><rect x="4" y="6.3" width="3" height="3" fill="#1a1a1a"/><rect x="4" y="10.8" width="3" height="3" fill="#8a8a8a"/><rect x="4" y="15.3" width="3" height="3" fill="#1a1a1a"/><rect x="8.5" y="7.3" width="6" height="1.2" fill="#6a6a6a"/><rect x="8.5" y="11.8" width="6" height="1.2" fill="#6a6a6a"/><rect x="8.5" y="16.3" width="6" height="1.2" fill="#6a6a6a"/></svg></div>
<div class="t" style="left:38.39999999999998px;top:355.34px;font-size:17.8px">Indexer data location</div>
<div class="a" style="left:12px;top:353.30px"><svg class="dc" width="20" height="23" viewBox="0 0 20 23"><path d="M0.75 0.75H14L19.25 6V22.25H0.75Z" fill="#fff" stroke="#9a9a9a" stroke-width="1.4"/><path d="M14 0.75V6H19.25" fill="#ececec" stroke="#a0a0a0" stroke-width="1.1"/><path d="M0.75 22.1H19.25" stroke="#7a7a7a" stroke-width="1.3"/><rect x="4" y="6.3" width="3" height="3" fill="#1a1a1a"/><rect x="4" y="10.8" width="3" height="3" fill="#8a8a8a"/><rect x="4" y="15.3" width="3" height="3" fill="#1a1a1a"/><rect x="8.5" y="7.3" width="6" height="1.2" fill="#6a6a6a"/><rect x="8.5" y="11.8" width="6" height="1.2" fill="#6a6a6a"/><rect x="8.5" y="16.3" width="6" height="1.2" fill="#6a6a6a"/></svg></div>
<div class="t" style="left:38.39999999999998px;top:383.84px;font-size:17.8px">Default excluded paths</div>
<div class="a" style="left:12px;top:381.80px"><svg class="dc" width="20" height="23" viewBox="0 0 20 23"><path d="M0.75 0.75H14L19.25 6V22.25H0.75Z" fill="#fff" stroke="#9a9a9a" stroke-width="1.4"/><path d="M14 0.75V6H19.25" fill="#ececec" stroke="#a0a0a0" stroke-width="1.1"/><path d="M0.75 22.1H19.25" stroke="#7a7a7a" stroke-width="1.3"/><rect x="4" y="6.3" width="3" height="3" fill="#1a1a1a"/><rect x="4" y="10.8" width="3" height="3" fill="#8a8a8a"/><rect x="4" y="15.3" width="3" height="3" fill="#1a1a1a"/><rect x="8.5" y="7.3" width="6" height="1.2" fill="#6a6a6a"/><rect x="8.5" y="11.8" width="6" height="1.2" fill="#6a6a6a"/><rect x="8.5" y="16.3" width="6" height="1.2" fill="#6a6a6a"/></svg></div>
<div class="t" style="left:38.39999999999998px;top:412.34px;font-size:17.8px">Default indexed paths</div>
<div class="a" style="left:12px;top:410.30px"><svg class="dc" width="20" height="23" viewBox="0 0 20 23"><path d="M0.75 0.75H14L19.25 6V22.25H0.75Z" fill="#fff" stroke="#9a9a9a" stroke-width="1.4"/><path d="M14 0.75V6H19.25" fill="#ececec" stroke="#a0a0a0" stroke-width="1.1"/><path d="M0.75 22.1H19.25" stroke="#7a7a7a" stroke-width="1.3"/><rect x="4" y="6.3" width="3" height="3" fill="#1a1a1a"/><rect x="4" y="10.8" width="3" height="3" fill="#8a8a8a"/><rect x="4" y="15.3" width="3" height="3" fill="#1a1a1a"/><rect x="8.5" y="7.3" width="6" height="1.2" fill="#6a6a6a"/><rect x="8.5" y="11.8" width="6" height="1.2" fill="#6a6a6a"/><rect x="8.5" y="16.3" width="6" height="1.2" fill="#6a6a6a"/></svg></div>
<div class="t" style="left:38.39999999999998px;top:440.84px;font-size:17.8px">Disable indexer backoff</div>
<div class="a" style="left:12px;top:438.80px"><svg class="dc" width="20" height="23" viewBox="0 0 20 23"><path d="M0.75 0.75H14L19.25 6V22.25H0.75Z" fill="#fff" stroke="#9a9a9a" stroke-width="1.4"/><path d="M14 0.75V6H19.25" fill="#ececec" stroke="#a0a0a0" stroke-width="1.1"/><path d="M0.75 22.1H19.25" stroke="#7a7a7a" stroke-width="1.3"/><rect x="4" y="6.3" width="3" height="3" fill="#1a1a1a"/><rect x="4" y="10.8" width="3" height="3" fill="#8a8a8a"/><rect x="4" y="15.3" width="3" height="3" fill="#1a1a1a"/><rect x="8.5" y="7.3" width="6" height="1.2" fill="#6a6a6a"/><rect x="8.5" y="11.8" width="6" height="1.2" fill="#6a6a6a"/><rect x="8.5" y="16.3" width="6" height="1.2" fill="#6a6a6a"/></svg></div>
<div class="t" style="left:38.39999999999998px;top:469.34px;font-size:17.8px">Do not allow locations on removable drives to be added</div>
<div class="a" style="left:12px;top:467.30px"><svg class="dc" width="20" height="23" viewBox="0 0 20 23"><path d="M0.75 0.75H14L19.25 6V22.25H0.75Z" fill="#fff" stroke="#9a9a9a" stroke-width="1.4"/><path d="M14 0.75V6H19.25" fill="#ececec" stroke="#a0a0a0" stroke-width="1.1"/><path d="M0.75 22.1H19.25" stroke="#7a7a7a" stroke-width="1.3"/><rect x="4" y="6.3" width="3" height="3" fill="#1a1a1a"/><rect x="4" y="10.8" width="3" height="3" fill="#8a8a8a"/><rect x="4" y="15.3" width="3" height="3" fill="#1a1a1a"/><rect x="8.5" y="7.3" width="6" height="1.2" fill="#6a6a6a"/><rect x="8.5" y="11.8" width="6" height="1.2" fill="#6a6a6a"/><rect x="8.5" y="16.3" width="6" height="1.2" fill="#6a6a6a"/></svg></div>
<div class="t" style="left:38.39999999999998px;top:497.84px;font-size:17.8px">Do not allow web search</div>
<div class="a" style="left:12px;top:495.80px"><svg class="dc" width="20" height="23" viewBox="0 0 20 23"><path d="M0.75 0.75H14L19.25 6V22.25H0.75Z" fill="#fff" stroke="#9a9a9a" stroke-width="1.4"/><path d="M14 0.75V6H19.25" fill="#ececec" stroke="#a0a0a0" stroke-width="1.1"/><path d="M0.75 22.1H19.25" stroke="#7a7a7a" stroke-width="1.3"/><rect x="4" y="6.3" width="3" height="3" fill="#1a1a1a"/><rect x="4" y="10.8" width="3" height="3" fill="#8a8a8a"/><rect x="4" y="15.3" width="3" height="3" fill="#1a1a1a"/><rect x="8.5" y="7.3" width="6" height="1.2" fill="#6a6a6a"/><rect x="8.5" y="11.8" width="6" height="1.2" fill="#6a6a6a"/><rect x="8.5" y="16.3" width="6" height="1.2" fill="#6a6a6a"/></svg></div>
<div class="t" style="left:38.39999999999998px;top:526.34px;font-size:17.8px">Enable indexing uncached Exchange folders</div>
<div class="a" style="left:12px;top:524.30px"><svg class="dc" width="20" height="23" viewBox="0 0 20 23"><path d="M0.75 0.75H14L19.25 6V22.25H0.75Z" fill="#fff" stroke="#9a9a9a" stroke-width="1.4"/><path d="M14 0.75V6H19.25" fill="#ececec" stroke="#a0a0a0" stroke-width="1.1"/><path d="M0.75 22.1H19.25" stroke="#7a7a7a" stroke-width="1.3"/><rect x="4" y="6.3" width="3" height="3" fill="#1a1a1a"/><rect x="4" y="10.8" width="3" height="3" fill="#8a8a8a"/><rect x="4" y="15.3" width="3" height="3" fill="#1a1a1a"/><rect x="8.5" y="7.3" width="6" height="1.2" fill="#6a6a6a"/><rect x="8.5" y="11.8" width="6" height="1.2" fill="#6a6a6a"/><rect x="8.5" y="16.3" width="6" height="1.2" fill="#6a6a6a"/></svg></div>
</div>
<div class="a" style="left:655px;top:705px;width:400px;height:23px;background:#f0f0f0"></div>
<div class="a" style="left:683px;top:705px;width:372px;height:22px;background:#cdcdcd"></div>
<svg class="a" style="left:661px;top:707px" width="16" height="18" viewBox="0 0 16 18"><path d="M11 3.5 L5 9 L11 14.5" fill="none" stroke="#646464" stroke-width="2.3"/></svg>
<div class="a" style="left:331px;top:728px;width:724px;height:31px;background:#f0f0f0"></div>
<svg class="a" style="left:330px;top:726px" width="726" height="36" viewBox="0 0 726 36"><path d="M8 3.5 H726" stroke="#dedede" stroke-width="1"/><path d="M113.7 6 H726" stroke="#6d6d6d" stroke-width="1.3"/><path d="M108.5 6 L116.1 33 H194 L205.8 6Z" fill="#f4f4f4"/><path d="M109 18.7 L116.1 33 H194 L205.8 6" fill="none" stroke="#6d6d6d" stroke-width="1.3"/><path d="M5.5 5.6 L18.8 33 H101.3 L113.7 5.4Z" fill="#fff"/><path d="M5.5 5.6 L18.8 33 H101.3 L113.7 5.4" fill="none" stroke="#6d6d6d" stroke-width="1.3"/></svg>
<div class="t" style="left:355px;top:736.74px;font-size:17px">Extended</div>
<div class="t" style="left:449.8px;top:736.74px;font-size:17px">Standard</div>
<div class="a" style="left:15px;top:759px;width:1040px;height:36px;background:#f0f0f0"></div>
<div class="a" style="left:331px;top:760px;width:724px;height:1px;background:#dadada"></div>
<svg class="a" style="left:0;top:0" width="1063" height="811" viewBox="0 0 1063 811"><defs><filter id="sh" x="-30%" y="-30%" width="160%" height="160%"><feGaussianBlur stdDeviation="3"/></filter></defs>
<g><path transform="translate(3,5)" d="M122.4,288.3 C106.5,276.5 85,257.2 61,257.2 A33.2,30.8 0 0 0 61,318.8 C85,318.8 106.5,300.2 122.4,288.3Z" fill="#000" opacity="0.4" filter="url(#sh)"/><path d="M122.4,288.3 C106.5,276.5 85,257.2 61,257.2 A33.2,30.8 0 0 0 61,318.8 C85,318.8 106.5,300.2 122.4,288.3Z" fill="#ff0000"/>
<rect x="65.3" y="276.4" width="3.3" height="24.4" fill="#fff"/><path d="M66.8 278 L60.5 283.3" stroke="#fff" stroke-width="3" stroke-linecap="round"/></g>
<g transform="translate(528.2,25.2)"><path transform="translate(3,5)" d="M122.4,288.3 C106.5,276.5 85,257.2 61,257.2 A33.2,30.8 0 0 0 61,318.8 C85,318.8 106.5,300.2 122.4,288.3Z" fill="#000" opacity="0.4" filter="url(#sh)"/><path d="M122.4,288.3 C106.5,276.5 85,257.2 61,257.2 A33.2,30.8 0 0 0 61,318.8 C85,318.8 106.5,300.2 122.4,288.3Z" fill="#ff0000"/></g>
<path d="M586 308.2 C586.5 304.8 589.5 303.7 592.8 303.7 C597 303.7 599.6 306.2 599.6 309.6 C599.6 312.6 597.8 315 594.8 317.8 L586.4 325.1 H601.1" fill="none" stroke="#fff" stroke-width="3" stroke-linejoin="round"/>
<path d="M675.2,313 V338.5 L681,332.8 L685.7,340.2 L688.7,338.7 L684.6,330.8 H692.2 Z" fill="#fff" stroke="#000" stroke-width="1.1" stroke-linejoin="miter"/>
</svg>
</body></html>
